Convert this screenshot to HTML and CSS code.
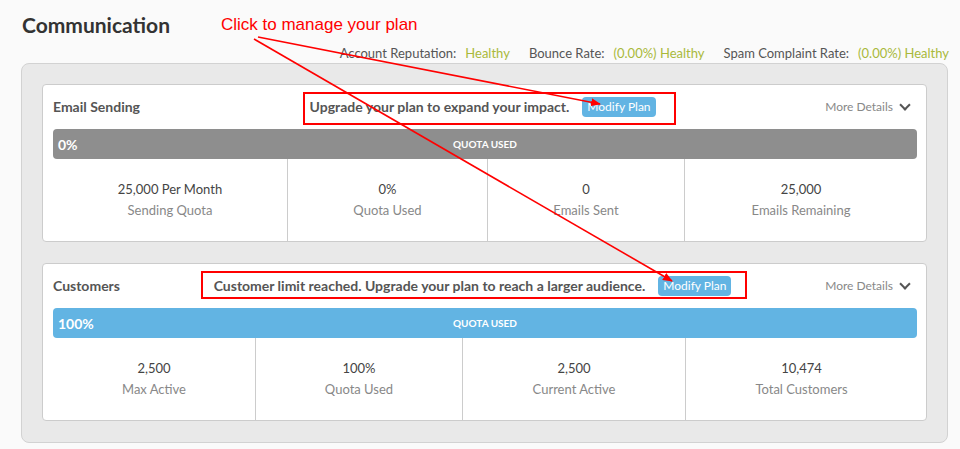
FILE: index.html
```html
<!DOCTYPE html>
<html lang="en">
<head>
    <meta charset="UTF-8">
    <meta name="viewport" content="width=device-width, initial-scale=1.0">
    <title>Communication</title>
    <link rel="stylesheet" href="styles.css">
</head>
<body>
    <div class="page">
        <h1>Communication</h1>

        <div class="status">
            <span class="status-label">Account Reputation:</span>
            <span class="status-value">Healthy</span>
            <span class="status-label">Bounce Rate:</span>
            <span class="status-value">(0.00%) Healthy</span>
            <span class="status-label">Spam Complaint Rate:</span>
            <span class="status-value">(0.00%) Healthy</span>
        </div>

        <div class="panel">
            <div class="card">
                <div class="card-header">
                    <span class="card-title">Email Sending</span>
                    <span class="notice">Upgrade your plan to expand your impact. <button class="btn">Modify Plan</button></span>
                    <span class="more">More Details <span class="chevron"></span></span>
                </div>
                <div class="bar bar-gray">
                    <span class="bar-percent">0%</span>
                    <span class="bar-label">QUOTA USED</span>
                </div>
                <div class="stats stats-email">
                    <div class="stat">
                        <div class="stat-value">25,000 Per Month</div>
                        <div class="stat-label">Sending Quota</div>
                    </div>
                    <div class="stat">
                        <div class="stat-value">0%</div>
                        <div class="stat-label">Quota Used</div>
                    </div>
                    <div class="stat">
                        <div class="stat-value">0</div>
                        <div class="stat-label">Emails Sent</div>
                    </div>
                    <div class="stat">
                        <div class="stat-value">25,000</div>
                        <div class="stat-label">Emails Remaining</div>
                    </div>
                </div>
            </div>

            <div class="card">
                <div class="card-header">
                    <span class="card-title">Customers</span>
                    <span class="notice">Customer limit reached. Upgrade your plan to reach a larger audience. <button class="btn">Modify Plan</button></span>
                    <span class="more">More Details <span class="chevron"></span></span>
                </div>
                <div class="bar bar-blue">
                    <span class="bar-percent">100%</span>
                    <span class="bar-label">QUOTA USED</span>
                </div>
                <div class="stats stats-customers">
                    <div class="stat">
                        <div class="stat-value">2,500</div>
                        <div class="stat-label">Max Active</div>
                    </div>
                    <div class="stat">
                        <div class="stat-value">100%</div>
                        <div class="stat-label">Quota Used</div>
                    </div>
                    <div class="stat">
                        <div class="stat-value">2,500</div>
                        <div class="stat-label">Current Active</div>
                    </div>
                    <div class="stat">
                        <div class="stat-value">10,474</div>
                        <div class="stat-label">Total Customers</div>
                    </div>
                </div>
            </div>
        </div>
    </div>

    <!-- annotation layer drawn over the page -->
    <div class="note">Click to manage your plan</div>
    <svg class="annotations" width="960" height="449" viewBox="0 0 960 449">
        <defs>
            <marker id="head" markerWidth="10" markerHeight="8" refX="9" refY="4" orient="auto" markerUnits="userSpaceOnUse">
                <path d="M0 0 L10 4 L0 8 Z" fill="#f00"/>
            </marker>
        </defs>
        <rect x="304" y="93" width="371" height="31" fill="none" stroke="#f00" stroke-width="2"/>
        <rect x="202" y="272" width="544" height="26" fill="none" stroke="#f00" stroke-width="2"/>
        <line x1="258" y1="37" x2="600" y2="104" stroke="#f00" stroke-width="1.6" marker-end="url(#head)"/>
        <line x1="254" y1="39" x2="672" y2="281" stroke="#f00" stroke-width="1.6" marker-end="url(#head)"/>
    </svg>
</body>
</html>
```

FILE: styles.css
```css
body {
    margin: 0;
    background-color: #fafafa;
    font-family: Lato, "Noto Sans", sans-serif;
    color: #555;
}

.page {
    padding: 0 12px 6px 21px;
}

h1 {
    margin: 0;
    padding: 12px 0 0 1px;
    font-size: 21px;
    line-height: 26px;
    font-weight: bold;
    color: #333;
}

.status {
    display: flex;
    justify-content: flex-end;
    align-items: center;
    margin-right: -1px;
    height: 19px;
    padding-top: 6px;
    line-height: 17px;
    font-size: 13px;
}

.status-label {
    color: #555;
    margin-right: 9px;
}

.status-value {
    color: #a9b93b;
    margin-right: 19px;
}

.status-value:last-child {
    margin-right: 0;
}

.panel {
    background: #e9e9e9;
    border: 1px solid #d2d2d2;
    border-radius: 8px;
    padding: 20px 20px 21px;
    display: flex;
    flex-direction: column;
    gap: 21px;
}

.card {
    background: white;
    border: 1px solid #ccc;
    border-radius: 4px;
    padding: 0 9px 0 10px;
}

.card-header {
    display: flex;
    justify-content: space-between;
    align-items: center;
    height: 43px;
    padding-bottom: 1px;
}

.card-title {
    font-size: 14px;
    font-weight: bold;
    color: #555;
}

.notice {
    font-size: 14px;
    font-weight: bold;
    color: #555;
    display: flex;
    align-items: center;
    gap: 13px;
}

.btn {
    font-family: Lato, "Noto Sans", sans-serif;
    font-size: 12px;
    color: white;
    background: #62b4e3;
    border: none;
    border-radius: 4px;
    height: 20px;
    padding: 0 5px;
    line-height: 20px;
}

.more {
    font-size: 12px;
    color: #888;
    margin-right: 8px;
    display: flex;
    align-items: center;
    gap: 8px;
}

.chevron {
    width: 6px;
    height: 6px;
    border-right: 2px solid #555;
    border-bottom: 2px solid #555;
    transform: rotate(45deg);
    margin-top: -4px;
}

.bar {
    display: grid;
    grid-template-columns: 1fr auto 1fr;
    align-items: center;
    height: 30px;
    border-radius: 4px;
    color: white;
    font-weight: bold;
    padding: 0 5px;
}

.bar-gray {
    background: #8e8e8e;
}

.bar-blue {
    background: #62b4e3;
}

.bar-percent {
    font-size: 14px;
}

.bar-label {
    font-size: 10px;
}

.stats {
    display: grid;
}

.stats-email {
    grid-template-columns: 234px 200px 197px 1fr;
}

.stats-customers {
    grid-template-columns: 202px 207px 223px 1fr;
}

.stat {
    text-align: center;
    padding: 20px 0 21px;
    font-size: 13px;
    line-height: 20px;
}

.stat + .stat {
    border-left: 1px solid #ccc;
}

.stat-value {
    color: #444;
}

.stat-label {
    color: #888;
    margin-top: 1px;
}

.note {
    position: absolute;
    left: 221px;
    top: 15px;
    font-family: "Liberation Sans", Arial, sans-serif;
    font-size: 17px;
    color: #f00;
}

.annotations {
    position: absolute;
    left: 0;
    top: 0;
    pointer-events: none;
}
```
